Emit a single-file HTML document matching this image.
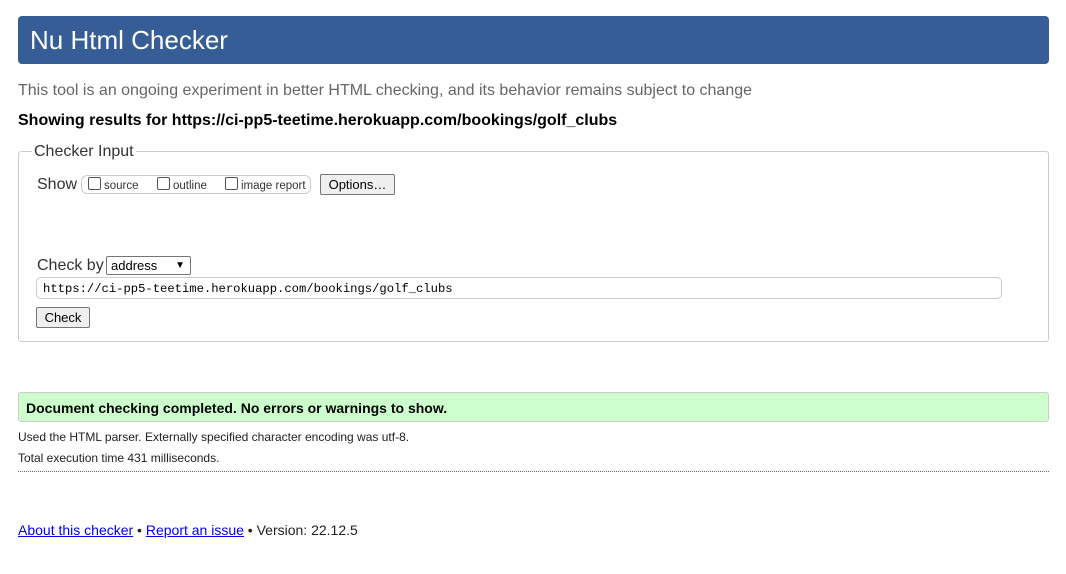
<!DOCTYPE html>
<html><head><meta charset="utf-8"><style>
body{margin:0;background:#fff;font-family:"Liberation Sans",Arial,sans-serif;color:#000;width:1066px;height:574px;position:relative;overflow:hidden}
.a{position:absolute;white-space:nowrap}
.cb{display:inline-block;width:11px;height:11px;border:1px solid #555;border-radius:2px;background:#fff;vertical-align:-1px;margin-right:3px}
.btn{position:absolute;background:#efefef;border:1px solid #767676;border-radius:2px;font-size:13px;text-align:center;box-sizing:border-box}
</style></head><body>
<div class="a" style="left:18px;top:16px;width:1031px;height:48px;background:#365d95;border-radius:4px"></div>
<div class="a" style="left:30px;top:25px;font-size:26px;color:#fff">Nu Html Checker</div>
<div class="a" style="left:18px;top:82px;font-size:16px;color:#666">This tool is an ongoing experiment in better HTML checking, and its behavior remains subject to change</div>
<div class="a" style="left:18px;top:112px;font-size:16px;font-weight:bold">Showing results for https://ci-pp5-teetime.herokuapp.com/bookings/golf_clubs</div>
<div class="a" style="left:18px;top:151px;width:1029px;height:189px;border:1px solid #ccc;border-radius:3px"></div>
<div class="a" style="left:32px;top:143px;font-size:16px;background:#fff;padding:0 2px;color:#333">Checker Input</div>
<div class="a" style="left:37px;top:176px;font-size:16px;color:#333">Show</div>
<div class="a" style="left:81px;top:175px;width:228px;height:17px;border:1px solid #ccc;border-radius:6px"></div>
<div class="a" style="left:88px;top:177px;font-size:11.5px;color:#333"><span class="cb"></span>source</div>
<div class="a" style="left:157px;top:177px;font-size:11.5px;color:#333"><span class="cb"></span>outline</div>
<div class="a" style="left:225px;top:177px;font-size:11.5px;color:#333"><span class="cb"></span>image report</div>
<div class="btn" style="left:320px;top:174px;width:75px;height:21px;line-height:19px">Options…</div>
<div class="a" style="left:37px;top:257px;font-size:16px;color:#333">Check by</div>
<div class="a" style="left:106px;top:256px;width:85px;height:19px;border:1px solid #767676;border-radius:2px;box-sizing:border-box;font-size:13px;padding-left:4px;line-height:17px">address<span style="position:absolute;right:5px;font-size:10px">&#9660;</span></div>
<div class="a" style="left:36px;top:277px;width:966px;height:22px;border:1px solid #ccc;border-radius:5px;box-sizing:border-box;font-family:'Liberation Mono',monospace;font-size:12.2px;line-height:22px;padding-left:6px">https://ci-pp5-teetime.herokuapp.com/bookings/golf_clubs</div>
<div class="btn" style="left:36px;top:307px;width:54px;height:21px;line-height:19px">Check</div>
<div class="a" style="left:18px;top:392px;width:1029px;height:28px;background:#ccffcc;border:1px solid #ccc;border-radius:3px"></div>
<div class="a" style="left:26px;top:400px;font-size:14px;font-weight:bold">Document checking completed. No errors or warnings to show.</div>
<div class="a" style="left:18px;top:430px;font-size:12px;color:#222">Used the HTML parser. Externally specified character encoding was utf-8.</div>
<div class="a" style="left:18px;top:451px;font-size:12px;color:#222">Total execution time 431 milliseconds.</div>
<div class="a" style="left:18px;top:471px;width:1031px;border-top:1px dotted #666"></div>
<div class="a" style="left:18px;top:522px;font-size:14px;color:#222"><span style="color:#00e;text-decoration:underline">About this checker</span> • <span style="color:#00e;text-decoration:underline">Report an issue</span> • Version: 22.12.5</div>
</body></html>
